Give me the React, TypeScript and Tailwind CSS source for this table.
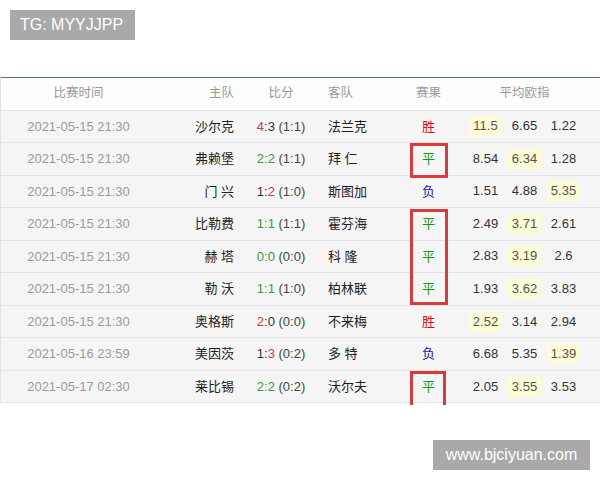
import React from "react";

type Row = {
  date: string;
  home: string;
  s: [number, number];
  ht: string;
  away: string;
  res: "胜" | "平" | "负";
  odds: [string, string, string];
  hi: number;
};

const rows: Row[] = [
  { date: "2021-05-15 21:30", home: "沙尔克", s: [4, 3], ht: "(1:1)", away: "法兰克", res: "胜", odds: ["11.5", "6.65", "1.22"], hi: 0 },
  { date: "2021-05-15 21:30", home: "弗赖堡", s: [2, 2], ht: "(1:1)", away: "拜 仁", res: "平", odds: ["8.54", "6.34", "1.28"], hi: 1 },
  { date: "2021-05-15 21:30", home: "门 兴", s: [1, 2], ht: "(1:0)", away: "斯图加", res: "负", odds: ["1.51", "4.88", "5.35"], hi: 2 },
  { date: "2021-05-15 21:30", home: "比勒费", s: [1, 1], ht: "(1:1)", away: "霍芬海", res: "平", odds: ["2.49", "3.71", "2.61"], hi: 1 },
  { date: "2021-05-15 21:30", home: "赫 塔", s: [0, 0], ht: "(0:0)", away: "科 隆", res: "平", odds: ["2.83", "3.19", "2.6"], hi: 1 },
  { date: "2021-05-15 21:30", home: "勒 沃", s: [1, 1], ht: "(1:0)", away: "柏林联", res: "平", odds: ["1.93", "3.62", "3.83"], hi: 1 },
  { date: "2021-05-15 21:30", home: "奥格斯", s: [2, 0], ht: "(0:0)", away: "不来梅", res: "胜", odds: ["2.52", "3.14", "2.94"], hi: 0 },
  { date: "2021-05-16 23:59", home: "美因茨", s: [1, 3], ht: "(0:2)", away: "多 特", res: "负", odds: ["6.68", "5.35", "1.39"], hi: 2 },
  { date: "2021-05-17 02:30", home: "莱比锡", s: [2, 2], ht: "(0:2)", away: "沃尔夫", res: "平", odds: ["2.05", "3.55", "3.53"], hi: 1 },
];

const font = { fontFamily: '"Liberation Sans", "Noto Sans CJK SC", sans-serif' };

function Score({ s, ht }: { s: [number, number]; ht: string }) {
  const [a, b] = s;
  if (a === b) {
    return (
      <span>
        <span className="text-[#3a9a3a]">
          {a}:{b}
        </span>{" "}
        <span className="text-[#444]">{ht}</span>
      </span>
    );
  }
  return (
    <span className="text-[#333]">
      <span className={a > b ? "text-[#d23a3a]" : ""}>{a}</span>:
      <span className={b > a ? "text-[#d23a3a]" : ""}>{b}</span>{" "}
      <span className="text-[#444]">{ht}</span>
    </span>
  );
}

function Result({ r }: { r: string }) {
  const c = r === "胜" ? "text-[#cc1111]" : r === "平" ? "text-[#139a13]" : "text-[#1a1aa0]";
  return <span className={c}>{r}</span>;
}

export default function App() {
  return (
    <div className="w-[600px] h-[480px] bg-white relative overflow-hidden" style={font}>
      <div className="pt-[10px] pl-[10px]">
        <div className="w-[125px] h-[30px] bg-[#a9a9a9] text-white text-[16px] flex items-center pl-[10px]">
          TG: MYYJJPP
        </div>
      </div>
      <div className="mt-[37px] relative w-[600px] border-t-[1.5px] border-[#54707f] border-l border-l-[#e2e2e2]">
        <div className="flex h-[32.5px] items-center bg-[#fdfdfd] border-b border-[#e3e3e3] text-[12.5px] text-[#9a9a9a]">
          <div className="w-[155px] text-center">比赛时间</div>
          <div className="w-[85px] text-right pr-[7px]">主队</div>
          <div className="w-[80px] text-center">比分</div>
          <div className="w-[70px] pl-[7px]">客队</div>
          <div className="w-[75px] text-center">赛果</div>
          <div className="w-[117px] text-center">平均欧指</div>
        </div>
        {rows.map((r, i) => (
          <div
            key={i}
            className="flex h-[32.55px] items-center bg-[#f5f5f5] border-b border-[#e4e4e4] text-[13px]"
          >
            <div className="w-[155px] text-center text-[#9b9b9b]">{r.date}</div>
            <div className="w-[85px] text-right pr-[7px] text-[#1e1e1e] whitespace-pre">{r.home}</div>
            <div className="w-[80px] text-center">
              <Score s={r.s} ht={r.ht} />
            </div>
            <div className="w-[70px] pl-[7px] text-[#1e1e1e] whitespace-pre">{r.away}</div>
            <div className="w-[75px] text-center">
              <Result r={r.res} />
            </div>
            <div className="w-[117px] flex text-[#333]">
              {r.odds.map((o, j) => (
                <div key={j} className="w-[39px] flex justify-center">
                  <span
                    className={
                      j === r.hi
                        ? "bg-[#fbfbd6] text-[#555] px-[4px] leading-[20px]"
                        : "px-[4px] leading-[20px]"
                    }
                  >
                    {o}
                  </span>
                </div>
              ))}
            </div>
          </div>
        ))}
        <div className="absolute left-[409px] top-[65px] w-[38px] h-[35px] border-[3px] border-[#d63b3e]" />
        <div className="absolute left-[409px] top-[131px] w-[38px] h-[96px] border-[3px] border-[#d63b3e]" />
        <div className="absolute left-[409px] top-[293px] w-[36px] h-[34px] border-[3px] border-[#d63b3e] border-b-0" />
      </div>
      <div className="absolute left-[433px] top-[440px] w-[157px] h-[30px] bg-[#a9a9a9] text-white text-[16px] flex items-center justify-center">
        www.bjciyuan.com
      </div>
    </div>
  );
}
